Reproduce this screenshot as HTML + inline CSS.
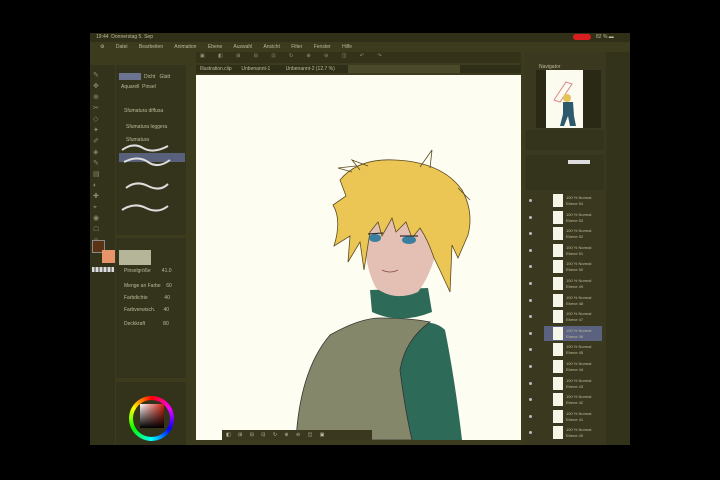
<!DOCTYPE html>
<html><head><meta charset="utf-8"><style>
*{margin:0;padding:0;box-sizing:border-box}
body{width:720px;height:480px;background:#000;position:relative;overflow:hidden;font-family:"Liberation Sans",sans-serif;font-size:5px;color:#c8c6a8}
.a{position:absolute}
.scr{left:90px;top:33px;width:540px;height:412px;background:#3c3b1e}
.t{position:absolute;white-space:nowrap;font-size:5px;color:#bdbb9c}
</style></head><body>
<div class="a scr"></div>
<div class="a" style="left:90px;top:33px;width:540px;height:9px;background:#302f18"></div>
<div class="t" style="left:96px;top:34px">19:44 &nbsp;Donnerstag 5. Sep</div>
<div class="a" style="left:573px;top:34px;width:18px;height:6px;background:#d81e1e;border-radius:3px"></div>
<div class="t" style="left:596px;top:34px">82 % ▬</div>
<div class="t" style="left:100px;top:44px;word-spacing:10px">⚙ Datei Bearbeiten Animation Ebene Auswahl Ansicht Filter Fenster Hilfe</div>
<div class="a" style="left:196px;top:52px;width:325px;height:11px;background:#34331a"></div>
<div class="t" style="left:200px;top:53px;letter-spacing:6px;color:#99977a">▣ ◧ ⊞ ⊟ ⊡ ↻ ⊕ ⊖ ◫ ↶ ↷</div>
<div class="a" style="left:196px;top:65px;width:325px;height:8px;background:#2f2e17"></div>
<div class="a" style="left:348px;top:65px;width:112px;height:8px;background:#4a4a2a"></div>
<div class="t" style="left:200px;top:66px">Illustration.clip &nbsp;&nbsp;&nbsp;&nbsp;&nbsp;&nbsp;Unbenannt-1 &nbsp;&nbsp;&nbsp;&nbsp;&nbsp;&nbsp;&nbsp;&nbsp;&nbsp;&nbsp;Unbenannt-2 (12.7 %)</div>
<div class="a" style="left:90px;top:65px;width:25px;height:380px;background:#33321a"></div>
<div class="t" style="left:93px;top:70px;font-size:7px;line-height:11px;width:20px;white-space:normal;color:#8c8a70;letter-spacing:3px">✎ ✥ ⊕ ✂ ◇ ✦ ✐ ◈ ✎ ▤ ◐ ✚ ⌖ ◉ ☖ ✧</div>
<div class="a" style="left:92px;top:240px;width:13px;height:13px;background:#5a3315;border:1px solid #888"></div>
<div class="a" style="left:102px;top:250px;width:13px;height:13px;background:#e8946a"></div>
<div class="a" style="left:92px;top:267px;width:22px;height:5px;background:repeating-linear-gradient(90deg,#ddd 0 2px,#888 2px 4px)"></div>
<div class="a" style="left:116px;top:65px;width:70px;height:170px;background:#34331b"></div>
<div class="a" style="left:119px;top:73px;width:22px;height:7px;background:#6b7390"></div>
<div class="t" style="left:144px;top:74px">Dicht &nbsp;&nbsp;Glatt</div>
<div class="t" style="left:121px;top:84px">Aquarell &nbsp;Pinsel</div>
<div class="a" style="left:119px;top:153px;width:66px;height:9px;background:#58607c"></div>
<svg class="a" style="left:118px;top:140px" width="60" height="80"><g fill="none" stroke="#ddd" stroke-width="2"><path d="M4 10 Q15 2 25 8 T50 6"/><path d="M6 22 Q20 15 30 22 T52 20"/><path d="M8 48 Q18 40 30 46 T50 44"/><path d="M4 70 Q16 62 28 68 T50 66"/></g></svg>
<div class="t" style="left:124px;top:108px">Sfumatura diffusa</div>
<div class="t" style="left:126px;top:124px">Sfumatura leggera</div>
<div class="t" style="left:126px;top:137px">Sfumatura</div>
<div class="a" style="left:116px;top:238px;width:70px;height:140px;background:#34331b"></div>
<div class="a" style="left:119px;top:250px;width:32px;height:15px;background:#b5b59a"></div>
<div class="t" style="left:124px;top:268px">Pinselgröße &nbsp;&nbsp;&nbsp;&nbsp;&nbsp;&nbsp;&nbsp;41.0</div>
<div class="t" style="left:124px;top:283px">Menge an Farbe &nbsp;&nbsp;&nbsp;60</div>
<div class="t" style="left:124px;top:295px">Farbdichte &nbsp;&nbsp;&nbsp;&nbsp;&nbsp;&nbsp;&nbsp;&nbsp;&nbsp;&nbsp;&nbsp;40</div>
<div class="t" style="left:124px;top:307px">Farbverwisch. &nbsp;&nbsp;&nbsp;&nbsp;&nbsp;40</div>
<div class="t" style="left:124px;top:321px">Deckkraft &nbsp;&nbsp;&nbsp;&nbsp;&nbsp;&nbsp;&nbsp;&nbsp;&nbsp;&nbsp;&nbsp;&nbsp;80</div>
<div class="a" style="left:116px;top:382px;width:70px;height:63px;background:#33321a"></div>
<div class="a" style="left:129px;top:396px;width:45px;height:45px;border-radius:50%;background:conic-gradient(red,#f0f,#00f,#0ff,#0f0,#ff0,red)"></div>
<div class="a" style="left:133px;top:400px;width:37px;height:37px;border-radius:50%;background:#33321a"></div>
<div class="a" style="left:140px;top:404px;width:24px;height:24px;background:linear-gradient(to bottom,transparent,#000),linear-gradient(to right,#fff,#d02010)"></div>
<div class="a" style="left:196px;top:75px;width:325px;height:365px;background:#fdfdf2"></div>
<svg class="a" style="left:196px;top:75px" width="325" height="365" viewBox="196 75 325 365">
<path d="M395 330 Q430 315 445 330 Q455 380 462 440 L405 440 Q400 380 395 330Z" fill="#2d6a58"/>
<path d="M296 440 Q300 370 330 335 Q360 318 380 318 Q410 318 430 322 Q405 340 400 370 Q405 410 412 440Z" fill="#85876a" stroke="#333" stroke-width="0.8"/>
<path d="M370 290 L372 312 Q400 325 432 312 L428 288Z" fill="#2d6a58"/>
<path d="M364 215 Q362 262 376 288 Q395 302 418 292 Q440 262 440 215Z" fill="#e3bfb4"/>
<path d="M340 180 Q358 158 395 160 Q442 162 462 190 Q474 212 468 235 L458 258 L452 245 L450 292 Q440 270 434 258 Q428 240 420 228 L412 238 L406 222 L396 232 L392 218 L382 236 L378 222 L370 232 L364 270 L360 242 L348 262 L350 236 L334 246 Q342 220 333 205 L346 196 Z" fill="#ebc655" stroke="#5a4a20" stroke-width="0.8"/>
<path d="M352 172 L338 168 L356 166 M360 170 L352 160 L368 166 M420 167 L432 150 L430 168 M458 188 L470 200" fill="none" stroke="#5a4a20" stroke-width="0.8"/>
<ellipse cx="375" cy="238" rx="6" ry="4" fill="#3b7fa0"/><ellipse cx="409" cy="240" rx="7" ry="4" fill="#3b7fa0"/>
<path d="M368 234 L383 233 M400 236 L418 236" stroke="#333" stroke-width="1.2"/>
<path d="M382 270 Q390 274 398 270" stroke="#844" stroke-width="0.8" fill="none"/>
</svg>
<div class="a" style="left:222px;top:430px;width:150px;height:10px;background:#3a3920"></div>
<div class="t" style="left:226px;top:432px;letter-spacing:3px">◧ ⊞ ⊟ ⊡ ↻ ⊕ ⊖ ◫ ▣</div>
<div class="a" style="left:525px;top:52px;width:105px;height:393px;background:#3a3920"></div>
<div class="a" style="left:536px;top:70px;width:65px;height:58px;background:#2a2915"></div>
<div class="a" style="left:546px;top:70px;width:37px;height:58px;background:#fbfbf0"></div>
<svg class="a" style="left:546px;top:70px" width="37" height="58"><path d="M8 30 L20 12 L26 14 L14 32Z" fill="none" stroke="#d88" stroke-width="1"/><circle cx="21" cy="28" r="4" fill="#e6c256"/><path d="M17 32 L27 32 L28 46 L30 56 L24 56 L22 46 L18 56 L14 56 L17 44Z" fill="#2f5a6e"/></svg>
<div class="t" style="left:539px;top:64px">Navigator</div>
<div class="a" style="left:526px;top:130px;width:78px;height:20px;background:#34331b"></div>
<div class="a" style="left:526px;top:155px;width:78px;height:35px;background:#34331b"></div>
<div class="a" style="left:568px;top:160px;width:22px;height:4px;background:#ddd"></div>
<div id="layers"></div>
<script>
var h='';for(var i=0;i<15;i++){var y=194+i*16.6;var sel=i==8;
if(sel)h+='<div class="a" style="left:544px;top:'+(y-1)+'px;width:58px;height:15px;background:#5a6280"></div>';
h+='<div class="a" style="left:529px;top:'+(y+5)+'px;width:3px;height:3px;background:#bbb;border-radius:50%"></div>';
h+='<div class="a" style="left:553px;top:'+y+'px;width:10px;height:13px;background:#f5f5e8"></div>';
h+='<div class="t" style="left:566px;top:'+(y+1)+'px;font-size:4px">100 % Normal</div><div class="t" style="left:566px;top:'+(y+7)+'px;font-size:4px">Ebene '+(54-i)+'</div>';}
document.getElementById('layers').innerHTML=h;
</script>
<div class="a" style="left:606px;top:52px;width:24px;height:393px;background:#33321a"></div>
</body></html>
